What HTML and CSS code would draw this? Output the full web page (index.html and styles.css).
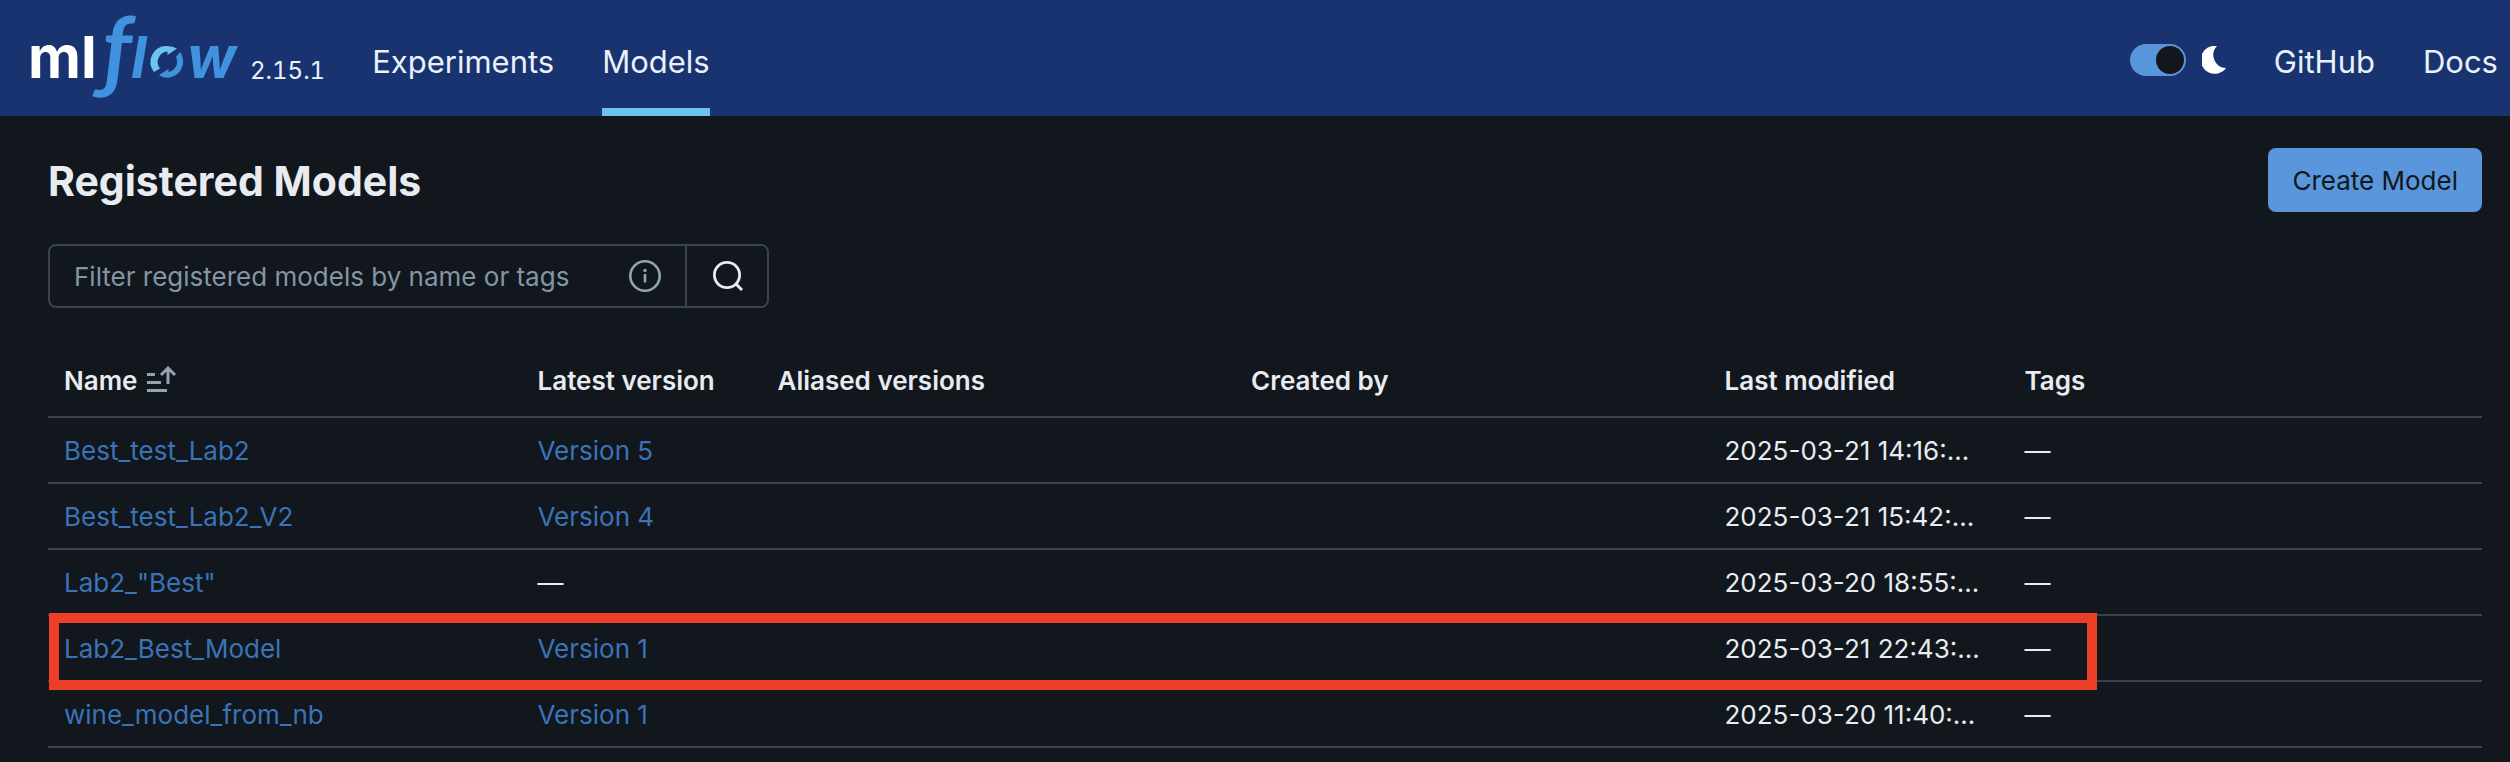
FILE: index.html
```html
<!DOCTYPE html>
<html lang="en">
<head>
<meta charset="utf-8">
<title>Registered Models - MLflow</title>
<link rel="stylesheet" href="styles.css">
</head>
<body>
<header class="topbar">
  <a class="brand" href="#" aria-label="mlflow">
    <svg class="logo" viewBox="0 0 212 84" aria-hidden="true">
      <text class="logo-ml" x="0" y="62">ml</text>
      <text class="logo-f" x="75" y="64">ƒ</text>
      <text class="logo-flow" x="103" y="62">l</text>
      <text class="logo-flow" x="159" y="62">w</text>
      <path d="M126 56A16 16 0 0 1 139 30Q145 30 149 32.500L139.500 39V35.500A10.500 10.500 0 0 0 132 52.500Z" fill="#6bc5e8"/>
      <path d="M152 36A16 16 0 0 1 137 61.500Q134 61 131 59L140.500 53V56A10.500 10.500 0 0 0 148 41Z" fill="#4192de"/>
    </svg>
    <span class="version">2.15.1</span>
  </a>
  <nav class="nav">
    <a href="#">Experiments</a>
    <a class="active" href="#" aria-current="page">Models</a>
  </nav>
  <div class="tools">
    <label class="theme">
      <input class="switch" type="checkbox" role="switch" aria-label="Dark theme" checked>
      <svg class="moon" viewBox="0 0 24 28" aria-hidden="true"><path d="M15 0A14 14 0 1 0 24 22A13 13 0 0 1 15 0Z" fill="#fff"/></svg>
    </label>
    <a href="#">GitHub</a>
    <a href="#">Docs</a>
  </div>
</header>
<main class="page">
  <div class="heading">
    <h1>Registered Models</h1>
    <button class="create" type="button">Create Model</button>
  </div>
  <form class="search">
    <input class="filter" type="text" placeholder="Filter registered models by name or tags" aria-label="Filter registered models by name or tags">
    <svg class="info" viewBox="0 0 32 32" aria-hidden="true"><circle cx="16" cy="16" r="14.700" fill="none" stroke="currentColor" stroke-width="2.600"/><path d="M16 14V22.500" stroke="currentColor" stroke-width="2.600"/><circle cx="16" cy="10.500" r="1.700" fill="currentColor"/></svg>
    <button class="submit" type="button" aria-label="Search">
      <svg class="glass" viewBox="0 0 32 32" aria-hidden="true"><circle cx="16" cy="15" r="12.600" fill="none" stroke="currentColor" stroke-width="2.800"/><path d="M25 24L31 30" stroke="currentColor" stroke-width="3"/></svg>
    </button>
  </form>
  <table class="models">
    <colgroup><col><col class="col-version"><col><col><col class="col-modified"><col></colgroup>
    <thead>
      <tr>
        <th><span class="sorted">Name <svg class="sort" viewBox="0 0 30 28" aria-hidden="true"><path d="M0 9.500H8M0 17.500H14M0 25.500H20M21 19V4M14 10L21 3L28 10" fill="none" stroke="currentColor" stroke-width="3"/></svg></span></th>
        <th>Latest version</th><th>Aliased versions</th><th>Created by</th><th>Last modified</th><th>Tags</th>
      </tr>
    </thead>
    <tbody>
      <tr><td><a href="#">Best_test_Lab2</a></td><td><a href="#">Version 5</a></td><td></td><td></td><td>2025-03-21 14:16:...</td><td>—</td></tr>
      <tr><td><a href="#">Best_test_Lab2_V2</a></td><td><a href="#">Version 4</a></td><td></td><td></td><td>2025-03-21 15:42:...</td><td>—</td></tr>
      <tr><td><a href="#">Lab2_"Best"</a></td><td>—</td><td></td><td></td><td>2025-03-20 18:55:...</td><td>—</td></tr>
      <tr class="marked"><td><a href="#">Lab2_Best_Model</a></td><td><a href="#">Version 1</a></td><td></td><td></td><td>2025-03-21 22:43:...</td><td>—</td></tr>
      <tr><td><a href="#">wine_model_from_nb</a></td><td><a href="#">Version 1</a></td><td></td><td></td><td>2025-03-20 11:40:...</td><td>—</td></tr>
    </tbody>
  </table>
</main>
</body>
</html>
```
FILE: styles.css
```css
*, *::before, *::after { box-sizing: border-box; }
body {
  margin: 0;
  background: #11171c;
  color: #e8ecf0;
  font: 26px/32px Inter, "Liberation Sans", sans-serif;
}
a { text-decoration: none; }
button, input { font: inherit; }
svg { display: block; }

.topbar {
  display: flex;
  height: 116px;
  padding: 0 12px 0 28px;
  background: #18336f;
}
.topbar a { color: #eaf1fb; }
.brand { display: flex; align-items: center; gap: 10px; }
.logo { width: 212px; height: 84px; overflow: visible; }
.logo-ml { font: 700 58px Inter, sans-serif; fill: #fff; }
.logo-f { font: italic 700 88px Lato, sans-serif; fill: #4192de; }
.logo-flow { font: italic 700 58px Inter, sans-serif; fill: #4192de; }
.version { font-size: 24px; padding-top: 26px; font-variant-numeric: tabular-nums; }
.nav { display: flex; gap: 48px; margin-left: 47px; font-size: 31px; }
.nav a {
  display: flex;
  align-items: center;
  padding-top: 16px;
  border-bottom: 8px solid transparent;
}
.nav .active { border-color: #6bc5e8; }
.tools {
  display: flex;
  align-items: center;
  gap: 48px;
  margin-left: auto;
  padding-top: 8px;
  font-size: 31px;
}
.theme { display: flex; align-items: center; gap: 16px; padding-bottom: 4px; }
.switch {
  appearance: none;
  display: flex;
  width: 56px;
  height: 32px;
  margin: 0;
  padding: 2px;
  border-radius: 16px;
  background: #5996db;
}
.switch::before {
  content: "";
  width: 28px;
  height: 28px;
  border-radius: 50%;
  background: #11171c;
}
.switch:checked { justify-content: flex-end; }
.moon { width: 24px; height: 28px; }

.page { padding: 32px 28px 0 48px; }
.heading { display: flex; align-items: center; justify-content: space-between; }
h1 { margin: 0; padding-top: 2px; font-size: 41px; line-height: 62px; font-weight: 700; }
.create {
  padding: 17px 24px 15px;
  border: 0;
  border-radius: 8px;
  background: #5996db;
  color: #11171c;
}
.search {
  display: flex;
  align-items: stretch;
  width: 721px;
  height: 64px;
  margin-top: 32px;
  border: 2px solid #37444f;
  border-radius: 8px;
}
.filter {
  flex: 1;
  min-width: 0;
  padding: 2px 0 0 24px;
  border: 0;
  background: transparent;
  color: inherit;
}
.filter::placeholder { color: #8396a5; opacity: 1; }
.info { width: 32px; margin-right: 24px; color: #92a4b3; }
.submit {
  display: flex;
  align-items: center;
  padding: 0 24px;
  border: 0;
  border-left: 2px solid #37444f;
  background: transparent;
  color: #e8ecf0;
}
.glass { width: 32px; height: 32px; }

.models {
  width: 100%;
  margin-top: 36px;
  table-layout: fixed;
  border-spacing: 0;
}
.col-version { width: 240px; }
.col-modified { width: 300px; }
th, td {
  padding: 17px 16px 15px;
  border-bottom: 2px solid #37444f;
  text-align: left;
  white-space: nowrap;
}
th { padding: 21px 16px 19px; font-weight: 600; }
td a { color: #3b73b8; }
.sorted { display: flex; gap: 10px; }
.sort { width: 30px; height: 28px; color: #92a4b3; }
.marked { position: relative; }
.marked td:first-child::after {
  content: "";
  position: absolute;
  top: -3px;
  bottom: -8px;
  left: 1px;
  width: 84.140%;
  border: 10px solid #eb4026;
}
```
